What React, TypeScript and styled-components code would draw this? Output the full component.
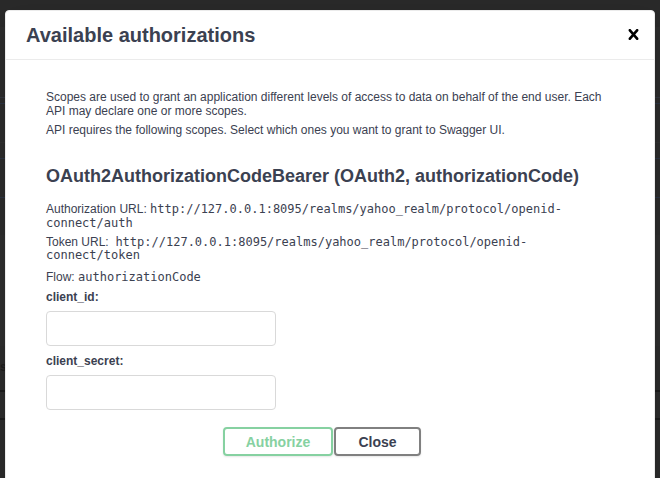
import React from "react";
import styled, { createGlobalStyle } from "styled-components";

const GlobalStyle = createGlobalStyle`
  html, body {
    margin: 0;
    padding: 0;
    width: 660px;
    height: 478px;
    overflow: hidden;
    background: #2c2c2c;
  }
  * { box-sizing: border-box; }
`;

const Screen = styled.div`
  position: relative;
  width: 660px;
  height: 478px;
  overflow: hidden;
  font-family: "Liberation Sans", Arial, sans-serif;
`;

const Backdrop = styled.div`
  display: flex;
  flex-direction: column;
  width: 100%;
  height: 100%;
  background: #2d2d2d;
`;

const Strip = styled.div<{ $h: number; $bg: string }>`
  height: ${(p) => p.$h}px;
  flex: none;
  background: ${(p) => p.$bg};
  font-size: 12px;
  font-weight: 700;
  color: #1e1e1e;
  line-height: ${(p) => p.$h}px;
  overflow: hidden;
`;

const Modal = styled.div`
  position: absolute;
  top: 10px;
  left: 5px;
  width: 650px;
  height: 520px;
  background: #fff;
  border: 1px solid #ebebeb;
  border-radius: 4px;
  box-shadow: 0 10px 30px 0 rgba(0, 0, 0, 0.2);
  display: flex;
  flex-direction: column;
`;

const Header = styled.div`
  height: 49px;
  flex: none;
  display: flex;
  align-items: center;
  border-bottom: 1px solid #ebebeb;
`;

const Title = styled.h3`
  flex: 1;
  margin: 0 0 0 20px;
  font-family: "Liberation Sans", Arial, sans-serif;
  font-size: 20px;
  font-weight: 700;
  color: #3b4151;
  line-height: 23px;
`;

const CloseIcon = styled.button`
  border: none;
  background: none;
  padding: 0;
  margin: 0 15px 2px 0;
  width: 11px;
  height: 11px;
  display: flex;
  cursor: pointer;
  svg { display: block; }
`;

const Content = styled.div`
  padding: 30px 40px 10px 40px;
  color: #3b4151;
`;

const TextBlock = styled.div`
  padding-right: 8px;
`;

const Text = styled.p`
  margin: 0 0 5px;
  font-size: 12px;
  line-height: 14px;
  color: #3b4151;
`;

const InfoLine = styled.p<{ $top?: number }>`
  margin: ${(p) => p.$top ?? 0}px 0 5.5px;
  font-size: 12px;
  line-height: 13.5px;
  color: #3b4151;
`;

const Code = styled.code`
  font-family: "DejaVu Sans Mono", "Liberation Mono", monospace;
  font-size: 12px;
  color: #3b4151;
`;

const SchemeTitle = styled.h4`
  margin: 29px 0 16px;
  font-size: 18px;
  line-height: 21px;
  font-weight: 700;
  color: #3b4151;
`;

const Field = styled.div<{ $top?: number }>`
  display: flex;
  flex-direction: column;
  align-items: flex-start;
  margin-top: ${(p) => p.$top ?? 0}px;
`;

const Label = styled.label`
  display: block;
  font-size: 12px;
  line-height: 14px;
  font-weight: 700;
  color: #3b4151;
  margin: 0 0 7px;
`;

const Input = styled.input`
  width: 230px;
  height: 35px;
  margin: 0 0 8px;
  padding: 8px 10px;
  border: 1px solid #d9d9d9;
  border-radius: 4px;
  background: #fff;
  font-family: "Liberation Sans", Arial, sans-serif;
  font-size: 13px;
  outline: none;
`;

const ButtonRow = styled.div`
  display: flex;
  justify-content: center;
  gap: 1px;
  padding: 9px 0 0;
`;

const Button = styled.button<{ $tone: "authorize" | "close"; $w: number; $mr?: number }>`
  width: ${(p) => p.$w}px;
  height: 29px;
  padding: 0;
  margin-right: ${(p) => p.$mr ?? 0}px;
  border: 2px solid ${(p) => (p.$tone === "authorize" ? "#86d1a1" : "#808080")};
  border-radius: 4px;
  background: transparent;
  box-shadow: 0 1px 2px rgba(0, 0, 0, 0.1);
  font-family: "Liberation Sans", Arial, sans-serif;
  font-size: 14px;
  font-weight: 700;
  color: ${(p) => (p.$tone === "authorize" ? "#86d1a1" : "#3b4151")};
  cursor: pointer;
`;

const strips: { h: number; bg: string; t?: string }[] = [
  { h: 27, bg: "#2a2a2a" },
  { h: 70, bg: "#2d2d2d" },
  { h: 1, bg: "#34383f" },
  { h: 5, bg: "#2d2d2d" },
  { h: 1, bg: "#2d3545" },
  { h: 38, bg: "#2d2d2d" },
  { h: 1, bg: "#313131" },
  { h: 15, bg: "#2d2d2d" },
  { h: 1, bg: "#2d3545" },
  { h: 38, bg: "#2d2d2d" },
  { h: 1, bg: "#2d3545" },
  { h: 37, bg: "#2d2d2d" },
  { h: 111, bg: "#2f2f2f" },
  { h: 14, bg: "#2d2d2d" },
  { h: 14, bg: "#2d2d2d", t: "s" },
  { h: 16, bg: "#2d2d2d" },
  { h: 2, bg: "#1c1c1c" },
  { h: 26, bg: "#2d2d2d" },
  { h: 2, bg: "#1c1c1c" },
  { h: 60, bg: "#2d2d2d" },
];

export default function App() {
  return (
    <>
      <GlobalStyle />
      <Screen>
        <Backdrop>
          {strips.map((s, i) => (
            <Strip key={i} $h={s.h} $bg={s.bg}>
              {s.t ?? ""}
            </Strip>
          ))}
        </Backdrop>
        <Modal>
          <Header>
            <Title>Available authorizations</Title>
            <CloseIcon aria-label="Close">
              <svg width="11" height="11" viewBox="5.2 4.8 9.6 10.4">
                <path
                  fill="#000"
                  d="M14.348 14.849c-.469.469-1.229.469-1.697 0L10 11.819l-2.651 3.029c-.469.469-1.229.469-1.697 0-.469-.469-.469-1.229 0-1.697l2.758-3.15-2.759-3.152c-.469-.469-.469-1.228 0-1.697.469-.469 1.228-.469 1.697 0L10 8.183l2.651-3.031c.469-.469 1.228-.469 1.697 0 .469.469.469 1.229 0 1.697l-2.758 3.152 2.758 3.15c.469.469.469 1.229 0 1.698z"
                />
              </svg>
            </CloseIcon>
          </Header>
          <Content>
            <TextBlock>
              <Text>
                Scopes are used to grant an application different levels of access to data on behalf of the end user. Each API may declare one or more scopes.
              </Text>
              <Text>API requires the following scopes. Select which ones you want to grant to Swagger UI.</Text>
              <SchemeTitle>OAuth2AuthorizationCodeBearer (OAuth2, authorizationCode)</SchemeTitle>
              <InfoLine>
                Authorization URL: <Code>http://127.0.0.1:8095/realms/yahoo_realm/protocol/openid-connect/auth</Code>
              </InfoLine>
              <InfoLine>
                Token URL:{"\u00a0"} <Code>http://127.0.0.1:8095/realms/yahoo_realm/protocol/openid-connect/token</Code>
              </InfoLine>
              <InfoLine $top={8.5}>
                Flow: <Code>authorizationCode</Code>
              </InfoLine>
            </TextBlock>
            <Field $top={5}>
              <Label htmlFor="client_id">client_id:</Label>
              <Input id="client_id" type="text" />
            </Field>
            <Field>
              <Label htmlFor="client_secret">client_secret:</Label>
              <Input id="client_secret" type="password" />
            </Field>
            <ButtonRow>
              <Button $tone="authorize" $w={110}>Authorize</Button>
              <Button $tone="close" $w={87} $mr={16}>Close</Button>
            </ButtonRow>
          </Content>
        </Modal>
      </Screen>
    </>
  );
}
